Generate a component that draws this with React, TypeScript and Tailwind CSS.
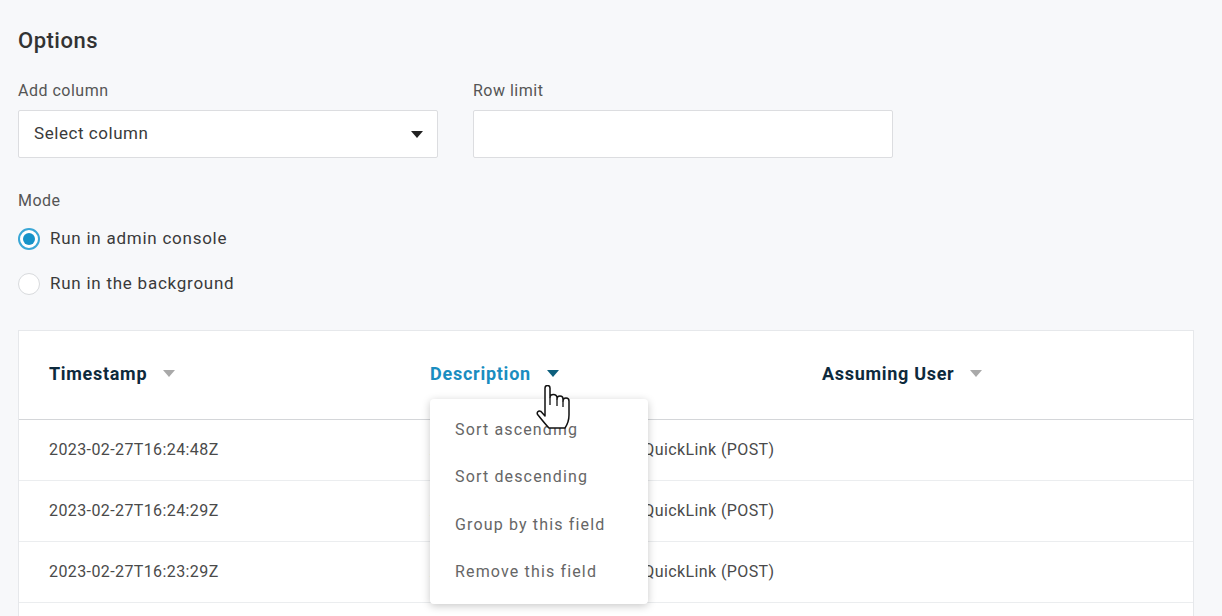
import React from "react";

const Caret = ({ className }: { className: string }) => (
  <svg width="12" height="7" viewBox="0 0 12 7" className={className}>
    <path d="M0 0 H12 L6 7 Z" fill="currentColor" />
  </svg>
);

const Radio = ({ checked, label }: { checked?: boolean; label: string }) => (
  <div className="flex h-[34px] items-center gap-[10px]">
    {checked ? (
      <span className="flex h-[22px] w-[22px] items-center justify-center rounded-full border-2 border-[#3aa7d6] bg-white">
        <span className="h-[12px] w-[12px] rounded-full bg-[#1693c9]" />
      </span>
    ) : (
      <span className="h-[22px] w-[22px] rounded-full border-[1.5px] border-[#d8dadd] bg-white" />
    )}
    <span className="text-[17px] tracking-[0.75px] text-[#3a3a3a]">{label}</span>
  </div>
);

const rows = ["2023-02-27T16:24:48Z", "2023-02-27T16:24:29Z", "2023-02-27T16:23:29Z"];

export default function App() {
  return (
    <div
      className="h-[616px] w-[1222px] overflow-hidden bg-[#f7f8fa] px-[18px] pt-[27px]"
      style={{ fontFamily: "Roboto, 'Liberation Sans', sans-serif" }}
    >
      <h1 className="text-[22px] font-medium leading-[28px] tracking-[0.5px] text-[#333]">Options</h1>

      <div className="mt-[26px] flex gap-[35px]">
        <div className="w-[420px]">
          <div className="text-[16px] leading-[20px] tracking-[0.5px] text-[#555]">Add column</div>
          <div className="mt-[9px] flex h-[48px] items-center justify-between rounded-[2px] border border-[#dcdde0] bg-white pl-[15px] pr-[14px]">
            <span className="text-[17px] tracking-[0.55px] text-[#3a3a3a]">Select column</span>
            <Caret className="text-[#222]" />
          </div>
        </div>
        <div className="w-[420px]">
          <div className="text-[16px] leading-[20px] tracking-[0.5px] text-[#555]">Row limit</div>
          <div className="mt-[9px] h-[48px] rounded-[2px] border border-[#dcdde0] bg-white" />
        </div>
      </div>

      <div className="mt-[33px] text-[16px] leading-[20px] tracking-[0.5px] text-[#555]">Mode</div>
      <div className="mt-[11px] flex flex-col gap-[11px]">
        <Radio checked label="Run in admin console" />
        <Radio label="Run in the background" />
      </div>

      <div className="relative mt-[29px] w-[1176px] border border-[#e6e8eb] bg-white">
        <div className="grid h-[89px] grid-cols-[381px_392px_1fr] items-center border-b border-[#d4d6d9] pb-[4px] pl-[30px]">
          <div className="flex items-center gap-[16px] text-[18px] font-bold tracking-[0.7px] text-[#0e2a3c]">
            Timestamp <Caret className="text-[#a9a9a9]" />
          </div>
          <div className="flex items-center gap-[16px] text-[18px] font-bold tracking-[0.75px] text-[#1a8dc0]">
            Description <Caret className="text-[#0d5f7d]" />
          </div>
          <div className="flex items-center gap-[16px] text-[18px] font-bold tracking-[0.7px] text-[#0e2a3c]">
            Assuming User <Caret className="text-[#a9a9a9]" />
          </div>
        </div>
        {rows.map((r) => (
          <div
            key={r}
            className="grid h-[61px] grid-cols-[381px_392px_1fr] items-center border-b border-[#ebedef] pl-[30px] text-[16px] tracking-[0.4px] text-[#4a4a4a]"
          >
            <div>{r}</div>
            <div className="whitespace-nowrap">Admin console request: add QuickLink (POST)</div>
            <div />
          </div>
        ))}
        <div className="h-[61px]" />

        <div className="absolute left-[411px] top-[68px] w-[218px] rounded-[4px] bg-white pb-[8px] pt-[7px] shadow-[0_2px_8px_rgba(0,0,0,0.22)]">
          {["Sort ascending", "Sort descending", "Group by this field", "Remove this field"].map((t) => (
            <div key={t} className="flex h-[47.5px] items-center px-[25px] text-[16px] tracking-[1.15px] text-[#666]">
              {t}
            </div>
          ))}
        </div>

        <svg className="absolute left-[516px] top-[54px]" width="36" height="46" viewBox="0 0 36 46">
          <path
            d="M10 29 V3 a2.5 2.5 0 0 1 5 0 V12.5 a3.5 3 0 0 1 7 0 V14 a3 3 0 0 1 6 0 V16 a3 3 0 0 1 6 0 V30 c0 6 -2 10 -4 13 H14 c-3 -3 -7 -8 -11 -13 c-2 -2.5 0.5 -5 3 -3.5 L10 31 Z"
            fill="white"
            stroke="#111"
            strokeWidth="1.5"
            strokeLinejoin="round"
          />
          <path d="M15 12.5 V20 M22 14 V21 M28 16 V22" stroke="#111" strokeWidth="1.3" fill="none" />
        </svg>
      </div>
    </div>
  );
}
